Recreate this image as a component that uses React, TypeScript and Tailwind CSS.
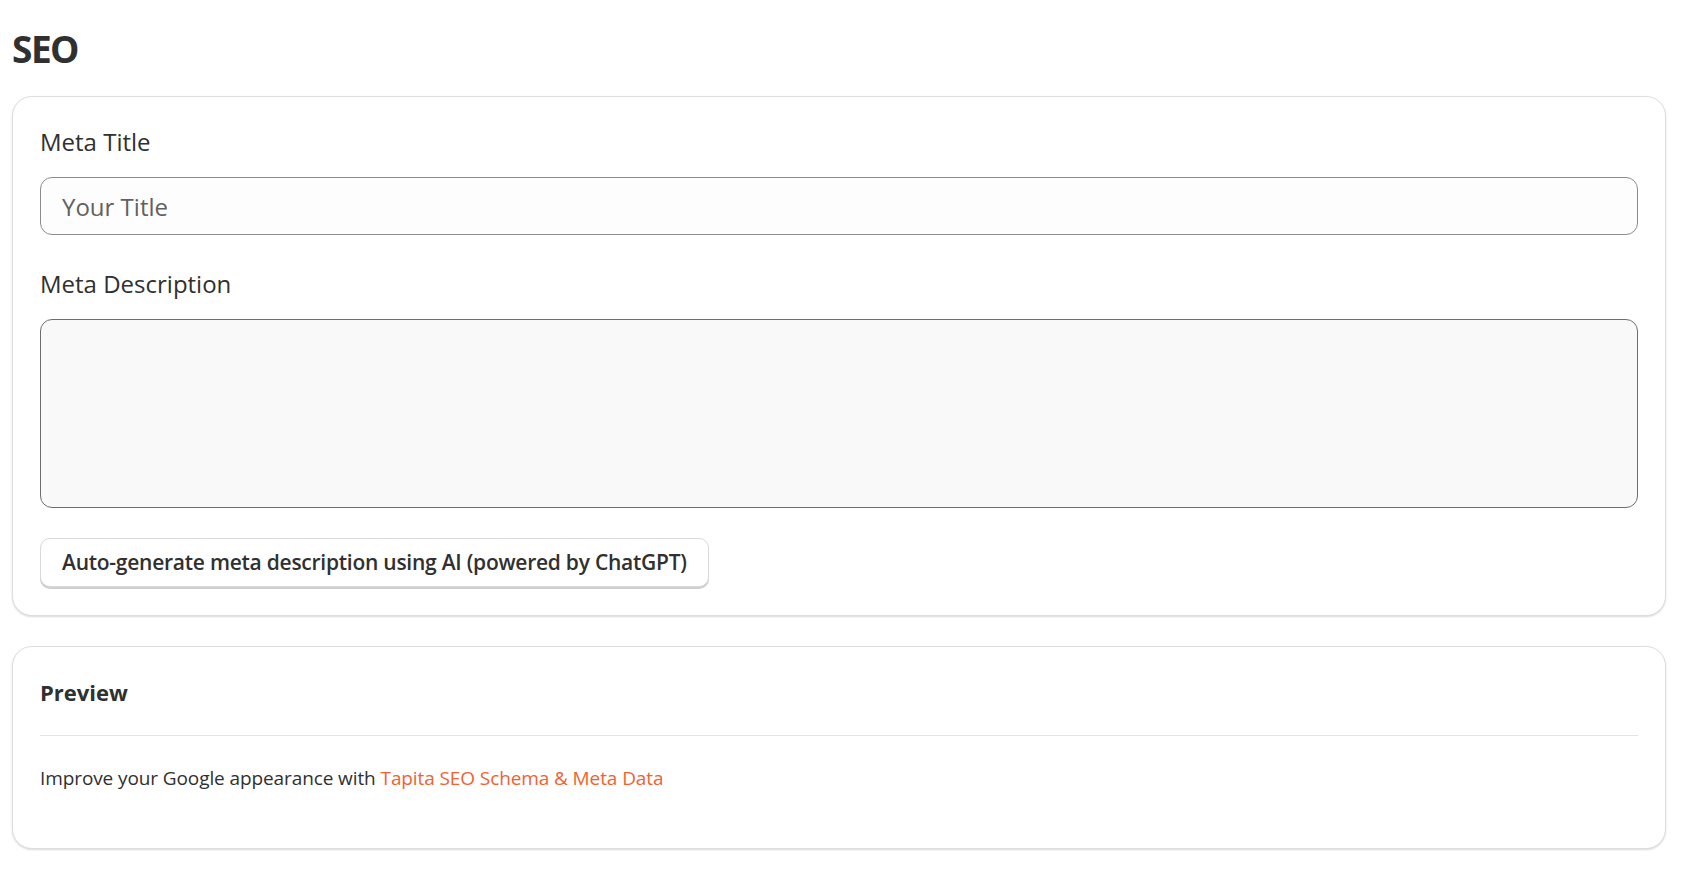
import { useState } from "react";

const labelClass = "block text-[24px] leading-[32px] text-[#303030]";

export default function App() {
  const [title, setTitle] = useState("");
  const [description, setDescription] = useState("");

  return (
    <div
      className="min-h-screen bg-white pl-[12px] pr-[29px] pb-10 text-[#303030]"
      style={{ fontFamily: '"Open Sans", "Noto Sans", sans-serif' }}
    >
      <h1 className="mt-[30px] text-[37px] font-bold leading-none tracking-[-1.5px] text-[#303030]">SEO</h1>

      <div className="mt-[29px] rounded-[20px] border border-[#dedede] bg-white px-[27px] pt-[29px] pb-[28px] shadow-[0_1px_2px_rgba(0,0,0,0.15)]">
        <label className={labelClass}>Meta Title</label>
        <input
          className="mt-[19px] block h-[58px] w-full rounded-[12px] border border-[#8c8c8c] bg-[#fdfdfd] px-[21px] text-[24px] text-[#303030] placeholder:text-[#616161] focus:outline-none"
          placeholder="Your Title"
          value={title}
          onChange={(e) => setTitle(e.target.value)}
        />

        <label className={`${labelClass} mt-[33px]`}>Meta Description</label>
        <textarea
          className="mt-[19px] block h-[189px] w-full resize-none rounded-[12px] border border-[#6e6e6e] bg-[#f9f9f9] px-[21px] py-3 text-[22px] text-[#303030] focus:outline-none"
          value={description}
          onChange={(e) => setDescription(e.target.value)}
        />

        <button
          type="button"
          className="mt-[30px] h-[49px] rounded-[10px] border border-[#d9d9d9] bg-white px-[21px] text-[21px] font-semibold tracking-[-0.25px] text-[#303030] shadow-[0_2px_0_#cfcfcf]"
        >
          Auto-generate meta description using AI (powered by ChatGPT)
        </button>
      </div>

      <div className="mt-[30px] rounded-[20px] border border-[#dedede] bg-white px-[27px] pt-[30px] pb-[56px] shadow-[0_1px_2px_rgba(0,0,0,0.15)]">
        <h2 className="text-[22px] font-bold leading-[30px] text-[#303030]">Preview</h2>
        <div className="mt-[28px] h-px bg-[#e3e3e3]" />
        <p className="mt-[28px] text-[19px] leading-[28px] tracking-[-0.1px] text-[#303030]">
          Improve your Google appearance with{" "}
          <a href="#" className="text-[#f0622f]">
            Tapita SEO Schema &amp; Meta Data
          </a>
        </p>
      </div>
    </div>
  );
}
